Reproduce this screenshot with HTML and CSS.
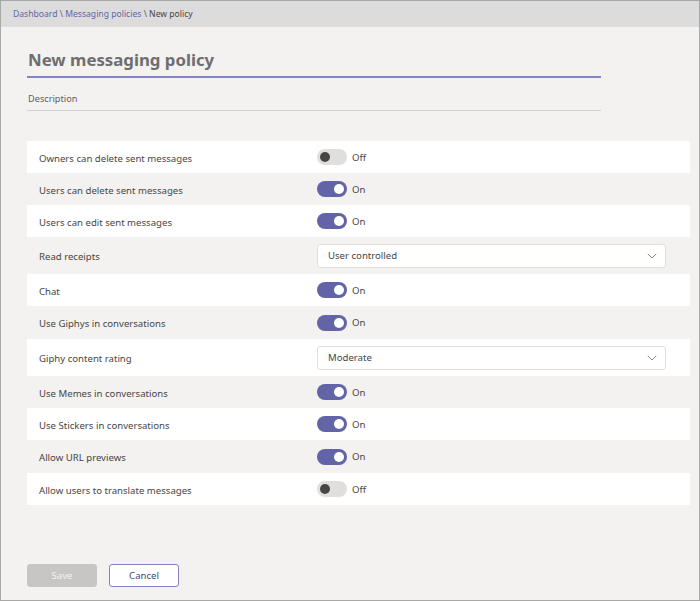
FILE: index.html
```html
<!DOCTYPE html>
<html>
<head>
<meta charset="utf-8">
<link rel="stylesheet" href="styles.css">
</head>
<body>
<div class="frame">
  <div class="header"><a class="crumb-link">Dashboard</a><span class="sep">&nbsp;\&nbsp;</span><a class="crumb-link">Messaging policies</a><span class="sep">&nbsp;\&nbsp;</span><span class="crumb-current">New policy</span></div>
  <div class="content">
    <div class="title-field">New messaging policy</div>
    <div class="desc-field">Description</div>

    <div class="settings">
      <div class="row white"><div class="label">Owners can delete sent messages</div><div class="control"><span class="toggle off"><span class="knob"></span></span><span class="state">Off</span></div></div>
      <div class="row gray"><div class="label">Users can delete sent messages</div><div class="control"><span class="toggle on"><span class="knob"></span></span><span class="state">On</span></div></div>
      <div class="row white"><div class="label">Users can edit sent messages</div><div class="control"><span class="toggle on"><span class="knob"></span></span><span class="state">On</span></div></div>
      <div class="row gray tall"><div class="label">Read receipts</div><div class="control"><div class="dropdown"><span>User controlled</span><svg class="chev" width="10" height="6" viewBox="0 0 10 6"><path d="M0.8 0.8 L5 5 L9.2 0.8" fill="none" stroke="#8a8886" stroke-width="1"/></svg></div></div></div>
      <div class="row white"><div class="label">Chat</div><div class="control"><span class="toggle on"><span class="knob"></span></span><span class="state">On</span></div></div>
      <div class="row gray r33"><div class="label">Use Giphys in conversations</div><div class="control"><span class="toggle on"><span class="knob"></span></span><span class="state">On</span></div></div>
      <div class="row white tall"><div class="label">Giphy content rating</div><div class="control"><div class="dropdown"><span>Moderate</span><svg class="chev" width="10" height="6" viewBox="0 0 10 6"><path d="M0.8 0.8 L5 5 L9.2 0.8" fill="none" stroke="#8a8886" stroke-width="1"/></svg></div></div></div>
      <div class="row gray"><div class="label">Use Memes in conversations</div><div class="control"><span class="toggle on"><span class="knob"></span></span><span class="state">On</span></div></div>
      <div class="row white"><div class="label">Use Stickers in conversations</div><div class="control"><span class="toggle on"><span class="knob"></span></span><span class="state">On</span></div></div>
      <div class="row gray r33"><div class="label">Allow URL previews</div><div class="control"><span class="toggle on"><span class="knob"></span></span><span class="state">On</span></div></div>
      <div class="row white"><div class="label">Allow users to translate messages</div><div class="control"><span class="toggle off"><span class="knob"></span></span><span class="state">Off</span></div></div>
    </div>

    <div class="buttons">
      <button class="btn save">Save</button>
      <button class="btn cancel">Cancel</button>
    </div>
  </div>
</div>
</body>
</html>
```

FILE: styles.css
```css
* { box-sizing: border-box; }
html, body { margin: 0; padding: 0; }
body {
  font-family: "Noto Sans", "Open Sans", sans-serif;
  background: #f3f2f1;
}
.frame {
  width: 700px;
  height: 601px;
  border: 1px solid #a8a8a8;
  background: #f3f2f1;
  display: flex;
  flex-direction: column;
}
.header {
  height: 26px;
  background: #dcdcdc;
  padding-left: 12px;
  font-size: 8.6px;
  line-height: 26px;
  color: #484644;
  white-space: nowrap;
}
.crumb-link { color: #6264a7; }
.sep { color: #605e5c; }
.crumb-current { color: #484644; }
.content {
  flex: 1;
  padding: 0 8px 0 26px;
  display: flex;
  flex-direction: column;
}
.title-field {
  margin-top: 19px;
  width: 574px;
  height: 32px;
  font-size: 16.8px;
  font-weight: bold;
  color: #6e6e6e;
  padding-left: 1px;
  line-height: 28px;
  border-bottom: 2px solid #8384c1;
}
.desc-field {
  margin-top: 10px;
  width: 574px;
  height: 23px;
  font-size: 9.2px;
  color: #605e5c;
  padding-left: 1px;
  line-height: 21px;
  border-bottom: 1px solid #d2d0ce;
}
.settings {
  margin-top: 30px;
  width: 663px;
  display: flex;
  flex-direction: column;
}
.row {
  height: 32px;
  display: flex;
  align-items: center;
  font-size: 9.6px;
  color: #484644;
}
.row.r33 { height: 33px; }
.row.tall { height: 37px; }
.row.white { background: #ffffff; }
.row.gray { background: #f3f2f1; }
.label {
  width: 290px;
  padding-left: 12px;
  padding-top: 2px;
}
.control {
  display: flex;
  align-items: center;
  flex: 1;
}
.toggle {
  width: 30px;
  height: 16px;
  border-radius: 8px;
  display: flex;
  align-items: center;
  padding: 0 3px;
}
.toggle .knob {
  width: 10px;
  height: 10px;
  border-radius: 50%;
}
.toggle.on { background: #6264a7; justify-content: flex-end; }
.toggle.on .knob { background: #ffffff; }
.toggle.off { background: #e1dfdd; justify-content: flex-start; }
.toggle.off .knob { background: #484644; }
.state {
  margin-left: 5px;
  color: #484644;
}
.dropdown {
  width: 349px;
  height: 24px;
  background: #ffffff;
  border: 1px solid #e1dfdd;
  border-radius: 3px;
  display: flex;
  align-items: center;
  justify-content: space-between;
  padding: 0 8px 0 10px;
  color: #484644;
}
.chev { display: block; }
.buttons {
  margin-top: auto;
  margin-bottom: 13px;
  display: flex;
  gap: 12px;
}
.btn {
  width: 70px;
  height: 23px;
  border-radius: 3px;
  font-family: "Noto Sans", "Open Sans", sans-serif;
  font-size: 9.6px;
  padding: 0;
}
.btn.save {
  background: #c8c6c4;
  border: 1px solid #c8c6c4;
  color: #f3f2f1;
}
.btn.cancel {
  background: #ffffff;
  border: 1px solid #8384c1;
  color: #464775;
}
```
